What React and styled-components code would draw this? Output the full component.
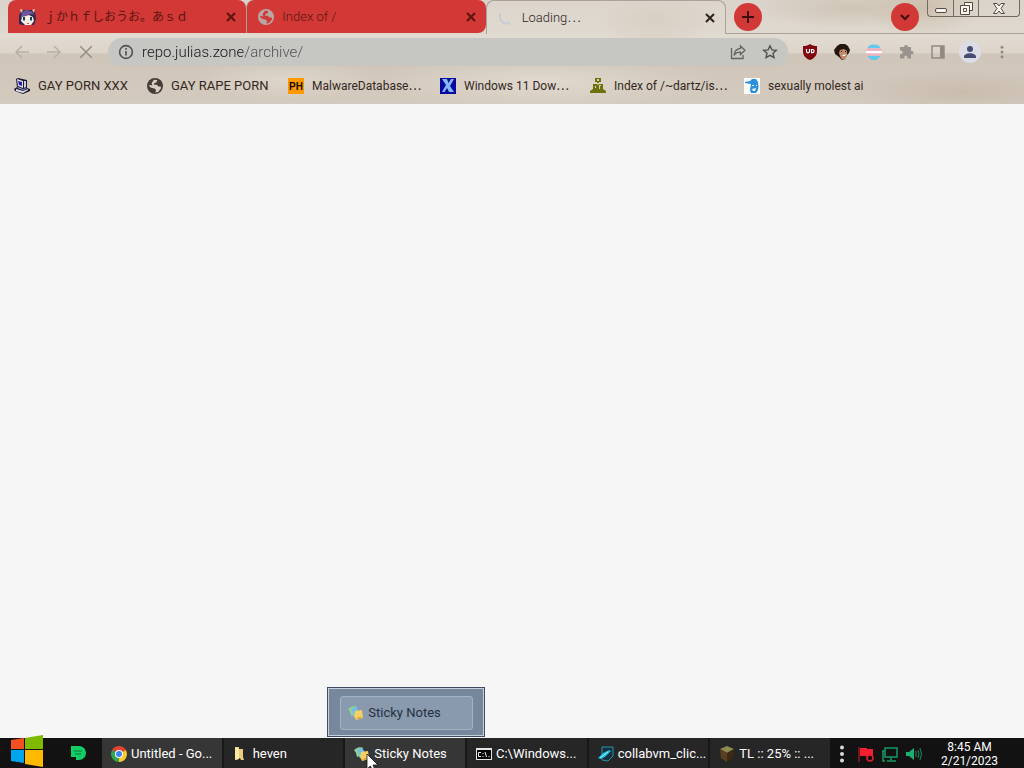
import React from "react";
import styled, { createGlobalStyle } from "styled-components";

const GlobalStyle = createGlobalStyle`
  * { box-sizing: border-box; }
  body {
    margin: 0;
    background: #f6f6f6;
    font: 300 13px/16px Roboto, "Noto Sans CJK JP", sans-serif;
    color: #2e241f;
  }
  button, input { font: inherit; color: inherit; }
  button { border: 0; padding: 0; background: none; }
  svg { display: block; flex: none; }
`;

const Desktop = styled.div`
  display: flex;
  flex-direction: column;
  min-height: 100vh;
  overflow: hidden;
`;

const Browser = styled.header`
  background:
    radial-gradient(ellipse 60px 30px at 90% 6px, #cdbfae, transparent),
    radial-gradient(ellipse 90px 20px at 83% 8px, #d0c4b6, transparent),
    radial-gradient(ellipse 60px 26px at 64% 20px, #d3c9bc, transparent),
    radial-gradient(ellipse 170px 26px at 53% 82px, #e2d9ce, transparent),
    radial-gradient(ellipse 90px 20px at 28% 80px, #dfd6ca, transparent),
    radial-gradient(ellipse 120px 22px at 94% 92px, #c9bdae, transparent),
    linear-gradient(#dad3c9 0, #dfd8ce 32px, #e2dbd1 36px, #dcd4c9 53px, #cfc5b9 54px, #d3c9bd 98px, #d3cbc2 104px);
`;

const TabStrip = styled.div`
  display: flex;
  height: 34px;
  padding-left: 8px;
`;

const Tabs = styled.div`
  display: flex;
  align-items: flex-start;
  flex: 0 1 718px;
  min-width: 0;
`;

const Tab = styled.div`
  display: flex;
  align-items: center;
  gap: 8px;
  flex: 1 1 0;
  min-width: 0;
  height: ${(p) => (p.$active ? 34 : 33)}px;
  padding: 1px 8px 0 11px;
  border-radius: ${(p) => (p.$active ? "8px 8px 0 0" : p.$last ? "8px 8px 8px 0" : "8px 8px 0 0")};
  background: ${(p) => (p.$active ? "#e2dad066" : "#d13836")};
  border: ${(p) => (p.$active ? "1px solid #aaa198" : "0")};
  border-bottom: 0;
  color: ${(p) => (p.$active ? "#2e241f" : "#5c1512")};
  & + & { border-left: 1px solid ${(p) => (p.$active ? "#aaa198" : "#8f2724")}; }
`;

const TabTitle = styled.span`
  flex: 1;
  min-width: 0;
  white-space: nowrap;
  font-size: ${(p) => (p.$wide ? 12 : 13)}px;
  font-weight: ${(p) => (p.$wide ? 400 : 300)};
`;

const CloseTab = styled.button`
  display: grid;
  place-items: center;
  width: 14px;
  height: 14px;
`;

const StripRest = styled.div`
  display: flex;
  flex: 1;
  padding-left: 8px;
  border-bottom: 1px solid #aaa198;
`;

const RoundButton = styled.button`
  display: grid;
  place-items: center;
  width: 28px;
  height: 28px;
  margin-top: 3px;
  border-radius: 50%;
  background: #d13836;
`;

const Spacer = styled.div`
  flex: 1;
`;

const WindowButtons = styled.div`
  display: flex;
  height: 17px;
  margin: 0 4px 0 8px;
  border: 1px solid #75695e;
  border-top: 0;
  border-radius: 0 0 4px 4px;
`;

const WindowButton = styled.button`
  display: grid;
  place-items: center;
  width: ${(p) => (p.$wide ? 41 : 25)}px;
  & + & { border-left: 1px solid #75695e; }
`;

const Toolbar = styled.div`
  display: flex;
  align-items: center;
  height: 36px;
  padding: 0 11px;
`;

const NavButton = styled.button`
  display: grid;
  place-items: center;
  width: 32px;
  height: 28px;
  margin-right: ${(p) => (p.$end ? 6 : 0)}px;
  margin-left: ${(p) => (p.$start ? -5 : 0)}px;
`;

const Omnibox = styled.label`
  display: flex;
  align-items: center;
  gap: 8px;
  flex: 1;
  min-width: 0;
  height: 28px;
  padding: 0 6px 0 10px;
  border-radius: 14px;
  background: #c6c6c2;
`;

const Address = styled.input`
  flex: 1;
  min-width: 0;
  padding: 0;
  border: 0;
  outline: 0;
  font-size: 15px;
  line-height: 20px;
  color: transparent;
  background: linear-gradient(90deg, #161616 101px, #4c4f52 101px);
  background-clip: text;
`;

const OmniButton = styled.button`
  display: grid;
  place-items: center;
  width: 24px;
  height: 24px;
`;

const Extensions = styled.div`
  display: flex;
  align-items: center;
  margin-left: 6px;
  margin-right: -5px;
`;

const ExtensionButton = styled.button`
  display: grid;
  place-items: center;
  width: 32px;
  height: 28px;
`;

const Bookmarks = styled.nav`
  display: flex;
  gap: 16px;
  height: 34px;
  padding: 0 14px 3px;
  align-items: center;
`;

const Bookmark = styled.a`
  display: flex;
  align-items: center;
  gap: 8px;
  color: #33281f;
  text-decoration: none;
  white-space: nowrap;
`;

const BookmarkLabel = styled.span`
  min-width: ${(p) => p.$width}px;
  font-size: ${(p) => (p.$caps ? 13 : 12)}px;
  font-weight: 400;
`;

const Page = styled.main`
  flex: 1;
  background: #f6f6f6;
`;

const Taskbar = styled.footer`
  display: flex;
  align-items: stretch;
  height: 30px;
  background: #121212;
  color: #fff;
  font-weight: 400;
`;

const StartButton = styled.button`
  position: relative;
  width: 55px;
  svg { position: absolute; left: 10px; top: -3px; }
`;

const PinnedButton = styled.button`
  display: grid;
  place-items: center;
  width: 47px;
`;

const TaskList = styled.div`
  display: grid;
  grid-template-columns: repeat(6, 1fr);
  gap: 2px;
  flex: 0 1 728px;
  min-width: 0;
  background: #181818;
`;

const TaskSlot = styled.div`
  position: relative;
  display: flex;
  min-width: 0;
`;

const Task = styled.button`
  display: flex;
  align-items: center;
  gap: 4px;
  flex: 1;
  min-width: 0;
  padding: 1px 6px 0 9px;
  background: ${(p) => (p.$active ? "#363636" : "#262626")};
  font-size: 13px;
  text-align: left;
  white-space: nowrap;
`;

const Preview = styled.div`
  position: absolute;
  left: -18px;
  bottom: 31px;
  padding: 8px 11px 6px 12px;
  width: 158px;
  height: 50px;
  border: 1px solid #3e4d61;
  box-shadow: inset 0 0 0 1px #c5d0dc;
  background: #77879c;
`;

const PreviewItem = styled.button`
  display: flex;
  align-items: center;
  gap: 4px;
  width: 100%;
  height: 34px;
  padding: 0 7px;
  border: 1px solid #a4b3c4;
  border-radius: 3px;
  background: #8999ae;
  color: #26303f;
  font-size: 13px;
`;

const Pointer = styled.div`
  position: absolute;
  left: 21px;
  top: 15px;
`;

const Tray = styled.div`
  display: flex;
  align-items: center;
  gap: 8px;
  margin-left: 4px;
  padding-top: 2px;
`;

const TrayButton = styled.button`
  display: grid;
  place-items: center;
  width: 16px;
`;

const Clock = styled.button`
  display: flex;
  flex-direction: column;
  align-items: center;
  justify-content: center;
  flex: 1;
  padding: 2px 7px 0 0;
  font-size: 12px;
  line-height: 14px;
`;

const CloseIcon = () => (
  <svg width="10" height="10" viewBox="0 0 10 10" stroke="currentColor" strokeWidth="2">
    <path d="M1 1l8 8M9 1L1 9" />
  </svg>
);

const GirlIcon = () => (
  <svg width="17" height="17" viewBox="0 0 17 17">
    <path d="M2 2l3-1h8l3 1 1 8-2 6H3L0 15V7z" fill="#33254e" />
    <path d="M3 3l4-2 5 1 4 4-5-1-3 2-6 2z" fill="#6b579c" />
    <path d="M3 8l4-1 3-1 4 2 1 4-3 4H6l-4-4z" fill="#f8ece4" />
    <path d="M4 8h2v4H4zM11 8h2v4h-2z" fill="#1c4150" />
    <path d="M4 11h2v1H4zM11 11h2v1h-2z" fill="#54b6bc" />
    <path d="M8 14h2v1H8z" fill="#b66361" />
    <path d="M1 0l3 1-2 3zM16 0l-3 1 2 3z" fill="#f2cdad" />
  </svg>
);

const GlobeIcon = ({ size = 14, color = "#443c36", land = "#d8cec2" }) => (
  <svg width={size} height={size} viewBox="0 0 14 14">
    <circle cx="7" cy="7" r="7" fill={color} />
    <path d="M6 1.500l3 .3-.6 2-1.800.6L6 6h2.600l1.300 1.500H12l.3 1.400-2.500 3.400-2.600.4.800-2.200-1.500-1.300L3.500 8.600 1.500 6.500l1.200-.3 2 .4L4 4.600z" fill={land} />
  </svg>
);

const SpinnerIcon = () => (
  <svg width="16" height="16" viewBox="0 0 16 16" fill="none" stroke="#c4ccd4" strokeWidth="2">
    <path d="M3 3a7 7 0 0 0 9 10" />
  </svg>
);

const InfoIcon = () => (
  <svg width="16" height="16" viewBox="0 0 16 16" fill="none" stroke="#4f5256" strokeWidth="1.6">
    <circle cx="8" cy="8" r="6.4" />
    <path d="M8 7v4.5M8 4v1.7" />
  </svg>
);

const ShareIcon = () => (
  <svg width="16" height="16" viewBox="0 0 16 16" fill="none" stroke="#65615c" strokeWidth="1.3">
    <path d="M1.500 4v10.500h11.500v-3.500M10.500 2l4.500 4.300-4.500 4.200V8.200C7.500 8 5.500 9 4 11.500c.4-4.500 3-6.800 6.500-7.200z" />
  </svg>
);

const StarIcon = () => (
  <svg width="16" height="16" viewBox="0 0 16 16" fill="none" stroke="#53504c" strokeWidth="1.4">
    <path d="M8 1.800l1.900 4.100 4.400.4-3.300 3 1 4.400L8 11.400l-4 2.300 1-4.400-3.300-3 4.400-.4z" />
  </svg>
);

const ShieldIcon = () => (
  <svg width="16" height="16" viewBox="0 0 16 16">
    <path d="M8 0c2 1.400 4 2 7 2v5c0 5-3 7.500-7 9-4-1.500-7-4-7-9V2c3 0 5-.6 7-2z" fill="#800610" />
    <path d="M4.500 5v2.300a1.500 1.500 0 0 0 3 0V5M9.500 5.500h1a1.600 1.600 0 0 1 0 3.200h-1z" fill="none" stroke="#fff" strokeWidth="1.200" />
  </svg>
);

const FaceIcon = () => (
  <svg width="16" height="16" viewBox="0 0 16 16">
    <path d="M3 2l3-2h5l3 2 2 4-1 3-2 2-2 4-3 1-3-3-4-3-1-4z" fill="#241710" />
    <path d="M6 6l4-1 3 2v4l-2 4-3 .500L6 12 5 9z" fill="#c48b68" />
    <path d="M7 7h1v1H7zM11 7h1v1h-1z" fill="#2a1712" />
    <path d="M8 11l4-.5-1 1.500H9z" fill="#fff" />
  </svg>
);

const StripedCircleIcon = () => (
  <svg width="16" height="16" viewBox="0 0 16 16">
    <path d="M3.300 1.500C6 0 10 0 12.700 1.500L14.500 4h-13z" fill="#62c9ee" />
    <path d="M1.500 4h13l1.300 3H.2z" fill="#eab4c0" />
    <path d="M.2 7h15.600v2.500H.2z" fill="#fff" />
    <path d="M.2 9.500h15.600L14.500 12h-13z" fill="#eab4c0" />
    <path d="M1.500 12h13l-2 2.500c-2.500 2-6.500 2-9 0z" fill="#62c9ee" />
  </svg>
);

const PuzzleIcon = () => (
  <svg width="16" height="16" viewBox="0 0 16 16">
    <path d="M6 3a2 2 0 0 1 4 0h3v4h1a1.600 1.600 0 0 1 0 3.300h-1V14.500H9.500V13a1.600 1.600 0 0 0-3.200 0v1.500H2V10h1a1.700 1.700 0 0 0 0-3.400H2V3z" fill="#99938d" />
  </svg>
);

const PanelIcon = () => (
  <svg width="14" height="14" viewBox="0 0 14 14">
    <path d="M1 1h12v12H1z" fill="none" stroke="#928b83" strokeWidth="1.500" />
    <path d="M9 1h4v12H9z" fill="#928b83" />
  </svg>
);

const ProfileIcon = () => (
  <svg width="22" height="22" viewBox="0 0 22 22">
    <circle cx="11" cy="11" r="11" fill="#dcdce6" />
    <circle cx="11" cy="8" r="3" fill="#474c71" />
    <path d="M5 16c0-5 12-5 12 0v1H5z" fill="#474c71" />
  </svg>
);

const DotsIcon = ({ color = "#928b83", r = 1.5, size = 16 }) => (
  <svg width="6" height={size} viewBox={`0 0 6 ${size}`} fill={color}>
    <circle cx="3" cy={size / 2 - r * 3.2} r={r} />
    <circle cx="3" cy={size / 2} r={r} />
    <circle cx="3" cy={size / 2 + r * 3.2} r={r} />
  </svg>
);

const ComputerIcon = () => (
  <svg width="16" height="16" viewBox="0 0 16 16">
    <path d="M2 1l2-1 9 2v8l3 1v2l-7 3-8-3-1-2 3-2z" fill="#1b1930" />
    <path d="M3 1l6 2v7l-5-2zM2 11l7 2 5-2v1l-5 3-7-2z" fill="#e4e0ee" />
    <path d="M4 3l4 1v4L5 7z" fill="#25219c" />
    <path d="M10 3l2 0v6l-2 1z" fill="#cfcbe0" />
    <path d="M4 9l5 2 4-1-1 1-3 1-6-2z" fill="#9a94bd" />
  </svg>
);

const PhIcon = () => (
  <svg width="16" height="16" viewBox="0 0 16 16">
    <path d="M0 0h16v16H0z" fill="#ff9900" />
    <text x="8" y="12" textAnchor="middle" fontFamily="Liberation Sans, sans-serif" fontSize="10" fontWeight="700" fill="#160b00">PH</text>
  </svg>
);

const BlueXIcon = () => (
  <svg width="16" height="16" viewBox="0 0 16 16">
    <path d="M0 0h16v16H0z" fill="#0808a0" />
    <path d="M2 1h5l1.500 4L11 1h3l-4 7 4 6H9l-2-4-2.500 4H2l4-7z" fill="#84b7f4" />
  </svg>
);

const PeopleIcon = () => (
  <svg width="16" height="16" viewBox="0 0 16 16" fill="#70700e">
    <path d="M5 0h6v4H9v1H7V4H5zM3 6h4l1 1 1-1h4v5l3 2v2H0v-2l3-2z" />
    <path d="M7 1h2v2H7zM5 8h1v2H5zM9 7h2v1h-1v3H9z" fill="#d9d2bd" />
  </svg>
);

const BlueHeadIcon = () => (
  <svg width="16" height="16" viewBox="0 0 16 16">
    <path d="M0 0h16v16H0z" fill="#f9fbfc" />
    <path d="M1 4l5-1 2-2h4l2 3 .5 4-.5 4-2 3H7l-1-3 1-6-6-1z" fill="#2b90dc" />
    <path d="M8 7h2v1H8zM12 7h1v1h-1zM8 11l4-1-1 3H9z" fill="#eef7fd" />
  </svg>
);

const WindowsLogo = () => (
  <svg width="34" height="33" viewBox="0 0 34 33">
    <path d="M1 5l13-2v11H1z" fill="#f25022" />
    <path d="M15 3l18-3v14H15z" fill="#7fba00" />
    <path d="M1 15h13v13L1 26z" fill="#00a4ef" />
    <path d="M15 15h18v17l-18-3z" fill="#ffb900" />
  </svg>
);

const LeafIcon = () => (
  <svg width="15" height="14" viewBox="0 0 15 14">
    <path d="M0 0h8a7 7 0 0 1 0 14H5v-3H0z" fill="#13ce66" />
    <path d="M3 5h8M4 8h6" stroke="#087637" strokeWidth="1" />
  </svg>
);

const ChromeIcon = () => (
  <svg width="16" height="16" viewBox="0 0 16 16">
    <path d="M8 8L1.100 4a8 8 0 0 1 13.800 0z" fill="#e04435" />
    <path d="M8 8h0l6.900-4A8 8 0 0 1 8 16z" fill="#fbc928" />
    <path d="M8 8v8A8 8 0 0 1 1.100 4z" fill="#31a353" />
    <circle cx="8" cy="8" r="4" fill="#fff" />
    <circle cx="8" cy="8" r="3" fill="#3c83ec" />
  </svg>
);

const FolderIcon = () => (
  <svg width="16" height="16" viewBox="0 0 16 16">
    <path d="M2 1h4v2h4v8l1 3H8l-1-2-4 2z" fill="#e9cd79" />
    <path d="M2 1l4 2v10l-4 1z" fill="#fbe9a5" />
  </svg>
);

const NotesIcon = () => (
  <svg width="16" height="16" viewBox="0 0 16 16">
    <path d="M1 3l7-2 3 7-8 3z" fill="#79d0c7" />
    <path d="M0 4l5-3 7 6-6 5z" fill="#8ed28b" />
    <path d="M3 4l5-2 3 5-5 4z" fill="#74bde7" />
    <path d="M7 6l7-1 1 8-7 2-2-4z" fill="#f4cf61" />
    <path d="M8 14l7-1-4-1z" fill="#d3963e" />
  </svg>
);

const ConsoleIcon = () => (
  <svg width="16" height="14" viewBox="0 0 16 14">
    <path d="M0 1h16v12H0z" fill="#e4e4e4" />
    <path d="M1 3h14v9H1z" fill="#050505" />
    <path d="M5 5.500H2.500v4H5M7 6v1M7 9v1M9 5l1.500 5M13 9v1" stroke="#f1f1f1" fill="none" />
  </svg>
);

const CollabIcon = () => (
  <svg width="16" height="16" viewBox="0 0 16 16">
    <path d="M4 1h11v9l-5 5-6-1z" fill="#16303c" stroke="#2a93b0" />
    <path d="M0 12l5-5 6-3 2 1-6 6-5 2z" fill="#1eb9df" />
    <path d="M2 12l8-6" stroke="#a7eef5" />
  </svg>
);

const BlockIcon = () => (
  <svg width="16" height="16" viewBox="0 0 16 16">
    <path d="M1 3l7-3 7 3-7 4z" fill="#8d8b4d" />
    <path d="M1 3l7 4v9l-6-4z" fill="#59401e" />
    <path d="M8 7l7-4-1 9-6 4z" fill="#3c2a14" />
  </svg>
);

const FlagIcon = () => (
  <svg width="16" height="16" viewBox="0 0 16 16">
    <path d="M1 1v15" stroke="#d01d2d" />
    <path d="M2 2h7v1h6v8H9l-1-1H2z" fill="#f51f2f" />
    <circle cx="12" cy="12" r="3" fill="#1a0e10" stroke="#e81e2d" strokeWidth="1.500" />
  </svg>
);

const NetworkIcon = () => (
  <svg width="16" height="16" viewBox="0 0 16 16" fill="none" stroke="#149a62" strokeWidth="1.500">
    <path d="M3 2h12v9H3zM9 11v3M5 15h9M0 5h3M1 5v10h2" />
  </svg>
);

const SpeakerIcon = () => (
  <svg width="16" height="14" viewBox="0 0 16 14">
    <path d="M0 5h3l5-4v12L3 9H0z" fill="#1bae70" />
    <path d="M10 4v6M12 3q2 4 0 8M14 1q3 6 0 12" fill="none" stroke="#158f5d" />
  </svg>
);

const PointerIcon = () => (
  <svg width="12" height="19" viewBox="0 0 12 19">
    <path d="M1 1v15l3.500-3 2.500 6 2.500-1L7 12h5z" fill="#fff" stroke="#111" strokeWidth=".8" />
  </svg>
);

const bookmarks = [
  { icon: <ComputerIcon />, text: "GAY PORN XXX", width: 93, caps: true },
  { icon: <GlobeIcon size={16} />, text: "GAY RAPE PORN", width: 101, caps: true },
  { icon: <PhIcon />, text: "MalwareDatabase⋯", width: 112 },
  { icon: <BlueXIcon />, text: "Windows 11 Dow⋯", width: 110 },
  { icon: <PeopleIcon />, text: "Index of /~dartz/is⋯", width: 114 },
  { icon: <BlueHeadIcon />, text: "sexually molest ai", width: 97 },
];

const tasks = [
  { icon: <ChromeIcon />, text: "Untitled - Go...", active: true },
  { icon: <FolderIcon />, text: "heven" },
  { icon: <NotesIcon />, text: "Sticky Notes", active: true, preview: true },
  { icon: <ConsoleIcon />, text: "C:\\Windows..." },
  { icon: <CollabIcon />, text: "collabvm_clic..." },
  { icon: <BlockIcon />, text: "TL :: 25% :: ..." },
];

export default function App() {
  return (
    <Desktop>
      <GlobalStyle />
      <Browser>
        <TabStrip>
          <Tabs>
            <Tab>
              <GirlIcon />
              <TabTitle $wide>ｊかｈｆしおうお。あｓｄ</TabTitle>
              <CloseTab aria-label="Close tab"><CloseIcon /></CloseTab>
            </Tab>
            <Tab $last>
              <GlobeIcon size={16} color="#b9a6a2" land="#d13836" />
              <TabTitle>Index of /</TabTitle>
              <CloseTab aria-label="Close tab"><CloseIcon /></CloseTab>
            </Tab>
            <Tab $active>
              <SpinnerIcon />
              <TabTitle>Loading⋯</TabTitle>
              <CloseTab aria-label="Close tab"><CloseIcon /></CloseTab>
            </Tab>
          </Tabs>
          <StripRest>
            <RoundButton aria-label="New tab">
              <svg width="12" height="12" viewBox="0 0 12 12" stroke="#3a0f0d" strokeWidth="2"><path d="M6 0v12M0 6h12" /></svg>
            </RoundButton>
            <Spacer />
            <RoundButton aria-label="Search tabs">
              <svg width="10" height="10" viewBox="0 0 10 10" fill="none" stroke="#3a0f0d" strokeWidth="2"><path d="M1 3l4 4 4-4" /></svg>
            </RoundButton>
            <WindowButtons>
              <WindowButton aria-label="Minimize">
                <svg width="12" height="12" viewBox="0 0 12 12"><rect x=".5" y="6.500" width="11" height="4" rx="1.500" fill="#f8f5f0" stroke="#544a42" /></svg>
              </WindowButton>
              <WindowButton aria-label="Restore">
                <svg width="13" height="13" viewBox="0 0 13 13" fill="#f8f5f0" stroke="#544a42"><path d="M4.500.5h8v8h-8z" /><path d="M.5 3.500h9v9h-9z" /><path d="M3.500 6.500h3v3h-3z" /></svg>
              </WindowButton>
              <WindowButton $wide aria-label="Close">
                <svg width="12" height="11" viewBox="0 0 12 11" fill="#f8f5f0" stroke="#544a42"><path d="M.5.5h3.500L6 3 8 .5h3.500L8 5.500l3.500 5H8L6 8l-2 2.500H.5l3.500-5z" /></svg>
              </WindowButton>
            </WindowButtons>
          </StripRest>
        </TabStrip>
        <Toolbar>
          <NavButton $start aria-label="Back">
            <svg width="14" height="14" viewBox="0 0 14 14" fill="none" stroke="#b9b0a5" strokeWidth="1.500"><path d="M14 7H1M7 1L1 7l6 6" /></svg>
          </NavButton>
          <NavButton aria-label="Forward">
            <svg width="14" height="14" viewBox="0 0 14 14" fill="none" stroke="#b9b0a5" strokeWidth="1.500"><path d="M0 7h13M7 1l6 6-6 6" /></svg>
          </NavButton>
          <NavButton $end aria-label="Stop">
            <svg width="12" height="12" viewBox="0 0 12 12" stroke="#958c82" strokeWidth="1.500"><path d="M0 0l12 12M12 0L0 12" /></svg>
          </NavButton>
          <Omnibox>
            <InfoIcon />
            <Address aria-label="Address" defaultValue="repo.julias.zone/archive/" />
            <OmniButton aria-label="Share"><ShareIcon /></OmniButton>
            <OmniButton aria-label="Bookmark this page"><StarIcon /></OmniButton>
          </Omnibox>
          <Extensions>
            <ExtensionButton aria-label="Ad blocker"><ShieldIcon /></ExtensionButton>
            <ExtensionButton aria-label="Face"><FaceIcon /></ExtensionButton>
            <ExtensionButton aria-label="Stripes"><StripedCircleIcon /></ExtensionButton>
            <ExtensionButton aria-label="Extensions"><PuzzleIcon /></ExtensionButton>
            <ExtensionButton aria-label="Side panel"><PanelIcon /></ExtensionButton>
            <ExtensionButton aria-label="Profile"><ProfileIcon /></ExtensionButton>
            <ExtensionButton aria-label="Menu"><DotsIcon /></ExtensionButton>
          </Extensions>
        </Toolbar>
        <Bookmarks>
          {bookmarks.map((b) => (
            <Bookmark href="#" key={b.text}>
              {b.icon}
              <BookmarkLabel $width={b.width} $caps={b.caps}>{b.text}</BookmarkLabel>
            </Bookmark>
          ))}
        </Bookmarks>
      </Browser>
      <Page />
      <Taskbar>
        <StartButton aria-label="Start"><WindowsLogo /></StartButton>
        <PinnedButton aria-label="Pinned app"><LeafIcon /></PinnedButton>
        <TaskList>
          {tasks.map((t) => (
            <TaskSlot key={t.text}>
              <Task $active={t.active}>{t.icon}{t.text}</Task>
              {t.preview && (
                <>
                  <Preview><PreviewItem><NotesIcon />Sticky Notes</PreviewItem></Preview>
                  <Pointer><PointerIcon /></Pointer>
                </>
              )}
            </TaskSlot>
          ))}
        </TaskList>
        <Tray>
          <TrayButton aria-label="Show hidden icons"><DotsIcon color="#d8d8d8" r={2} size={18} /></TrayButton>
          <TrayButton aria-label="Action center"><FlagIcon /></TrayButton>
          <TrayButton aria-label="Network"><NetworkIcon /></TrayButton>
          <TrayButton aria-label="Volume"><SpeakerIcon /></TrayButton>
        </Tray>
        <Clock>
          <span>8:45 AM</span>
          <span>2/21/2023</span>
        </Clock>
      </Taskbar>
    </Desktop>
  );
}
